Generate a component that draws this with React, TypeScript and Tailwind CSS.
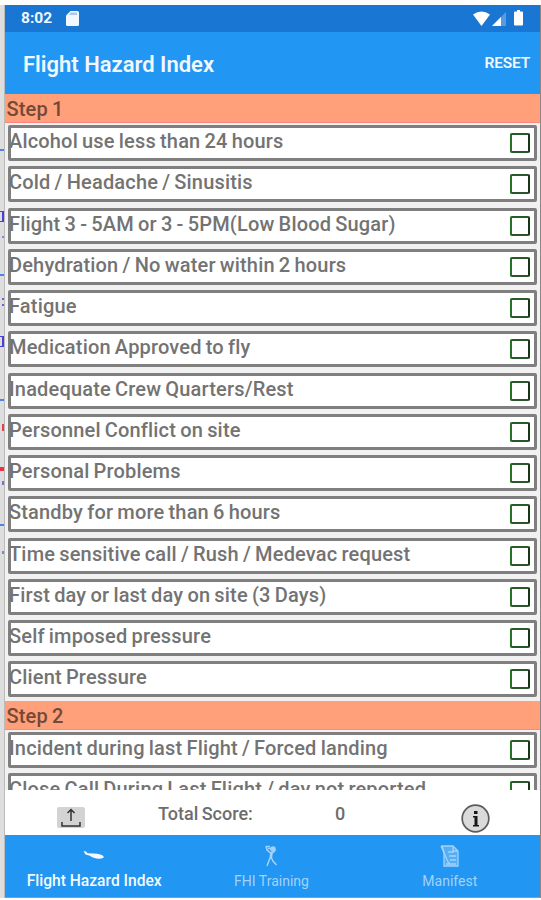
import React, { useState } from 'react';

const stepOne = [
  'Alcohol use less than 24 hours',
  'Cold / Headache / Sinusitis',
  'Flight 3 - 5AM or 3 - 5PM(Low Blood Sugar)',
  'Dehydration / No water within 2 hours',
  'Fatigue',
  'Medication Approved to fly',
  'Inadequate Crew Quarters/Rest',
  'Personnel Conflict on site',
  'Personal Problems',
  'Standby for more than 6 hours',
  'Time sensitive call / Rush / Medevac request',
  'First day or last day on site (3 Days)',
  'Self imposed pressure',
  'Client Pressure',
];

const stepTwo = [
  'Incident during last Flight / Forced landing',
  'Close Call During Last Flight / day not reported',
];

// slivers of the drawing behind the phone window
const edgeMarks = [
  { top: 149, className: 'h-[2px] w-[4px] bg-[#4f7fe8]' },
  { top: 211, className: 'h-[11px] w-[4px] border-y border-r-2 border-[#4a3fd8]' },
  { top: 236, className: 'h-[2px] w-[2px] ml-[2px] bg-[#8a84d8]' },
  { top: 274, className: 'h-[2px] w-[4px] bg-[#4f7fe8]' },
  { top: 298, className: 'h-[2px] w-[2px] ml-[2px] bg-[#6a60d8]' },
  { top: 304, className: 'h-[2px] w-[2px] ml-[2px] bg-[#6a60d8]' },
  { top: 336, className: 'h-[11px] w-[4px] border-y border-r-2 border-[#4a3fd8]' },
  { top: 399, className: 'h-[2px] w-[4px] bg-[#4f7fe8]' },
  { top: 424, className: 'h-[7px] w-[2px] ml-[2px] bg-[#e04545]' },
  { top: 467, className: 'h-[4px] w-[4px] bg-[#f03040]' },
  { top: 481, className: 'h-[4px] w-[2px] ml-[2px] bg-[#7a70d0]' },
  { top: 524, className: 'h-[2px] w-[4px] bg-[#4f7fe8]' },
  { top: 551, className: 'h-[3px] w-[2px] ml-[2px] bg-[#8580d0]' },
];

const StepHeader = ({ title }: { title: string }) => (
  <div className="h-[29px] shrink-0 border-b border-[#ff8585] bg-[#ffa07a] pl-[1.5px]">
    <h2 className="text-[20px] leading-[31px] font-medium tracking-[0.17px] [word-spacing:-1px] text-[#744938]">{title}</h2>
  </div>
);

interface HazardRowProps {
  label: string;
  checked: boolean;
  onToggle: () => void;
}

const HazardRow: React.FC<HazardRowProps> = ({ label, checked, onToggle }) => (
  <div className="h-[41.25px] shrink-0 pt-[2px] pr-[3px] pl-[3px]">
    <button
      onClick={onToggle}
      className="flex h-[36px] w-full items-start justify-between rounded-[2px] border-[3px] border-[#7f7f7f] bg-white pr-[4px] text-left"
    >
      <span className="-ml-[2px] text-[20px] leading-[26px] font-medium tracking-[0.17px] [word-spacing:-1px] whitespace-nowrap text-[#737373]">
        {label}
      </span>
      <span
        className={`mt-[5px] h-[20px] w-[20px] shrink-0 rounded-[2px] border-2 border-t-[#2b592b] border-r-[#173817] border-b-[#2b552b] border-l-[#267326] ${checked ? 'bg-[#267326]' : 'bg-white'}`}
      />
    </button>
  </div>
);

export default function App() {
  const [checked, setChecked] = useState<string[]>([]);

  const toggle = (label: string) => {
    setChecked(prev => (prev.includes(label) ? prev.filter(l => l !== label) : [...prev, label]));
  };

  const renderRow = (label: string) => (
    <HazardRow key={label} label={label} checked={checked.includes(label)} onToggle={() => toggle(label)} />
  );

  return (
    <div className="relative h-[900px] w-[541px] overflow-hidden bg-white pt-[5px] font-['Roboto',sans-serif]">
      <div className="flex h-[893px]">
        <div className="w-[5px] shrink-0 border-r border-[#bbb] bg-[#dedede]" />

        <div className="flex min-w-0 flex-1 flex-col">
          {/* Status bar */}
          <div className="flex h-[27px] shrink-0 items-center bg-[#1976d2] pl-[16px] text-[#f1f8ff]">
            <span className="text-[15.5px] leading-[27px] font-bold">8:02</span>
            <svg className="ml-[14px]" width="13" height="15" viewBox="0 0 13 15">
              <path d="M4.5 0h7Q13 0 13 1.5v12q0 1.5-1.5 1.5h-10Q0 15 0 13.500V4.500z" fill="#f2f8ff" />
              <path d="M4.500 1.500h6.500v2.500h-8z" fill="#a9caec" />
            </svg>
            <svg className="mr-[16px] ml-auto" width="51" height="17" viewBox="0 0 51 17">
              <path d="M0 4.500Q8.500-1.500 17 4.500L8.500 16z" fill="#fff" />
              <path d="M33 2v14H19z" fill="#5a9ade" />
              <path d="M28 7v9h-9z" fill="#fff" />
              <path d="M44 0h3v1.500h2q1 0 1 1v12q0 1-1 1h-7q-1 0-1-1v-12q0-1 1-1h2z" fill="#fff" />
            </svg>
          </div>

          {/* App bar */}
          <header className="flex h-[62px] shrink-0 items-center justify-between bg-[#2196f3] pr-[10px] pl-[18px] text-[#f1f8ff]">
            <h1 className="pt-[2px] text-[22px] font-semibold whitespace-nowrap">Flight Hazard Index</h1>
            <button className="pt-[2px] text-[15.5px] font-semibold tracking-[-0.2px]">RESET</button>
          </header>

          <main className="flex h-[696px] shrink-0 flex-col overflow-hidden bg-[#f1f1f1]">
            <StepHeader title="Step 1" />
            {stepOne.map(renderRow)}
            <StepHeader title="Step 2" />
            {stepTwo.map(renderRow)}
          </main>

          {/* Score */}
          <div className="flex h-[45px] shrink-0 items-start bg-white text-[18px] font-medium text-[#6d6d6d]">
            <button className="mt-[17px] ml-[52px]">
              <svg width="28" height="21" viewBox="0 0 28 21" fill="none" stroke="#333" strokeWidth="1.500">
                <rect width="28" height="21" rx="2" fill="#d3d3d3" stroke="none" />
                <path d="M14 14V2.500M10.500 6L14 2.500 17.500 6" />
                <path d="M5 15v4h18v-4" />
              </svg>
            </button>
            <span className="mt-[10px] ml-[73px] w-[177px] leading-[27px] [word-spacing:-1px]">Total Score:</span>
            <span className="mt-[10px] leading-[27px]">0</span>
            <button className="mt-[14px] mr-[50px] ml-auto">
              <svg width="29" height="29" viewBox="0 0 29 29">
                <circle cx="14.500" cy="14.500" r="13.300" fill="#dadada" stroke="#5c5c5c" strokeWidth="1.700" />
                <path d="M13 7h3.500v3H13zM12 12h4.500v9H18v1.500h-6V21h1.500v-7.500H12z" fill="#171717" />
              </svg>
            </button>
          </div>

          {/* Tabs */}
          <nav className="grid h-[62px] shrink-0 grid-cols-3 bg-[#2196f3] text-[#a3d2fa]">
            <button className="flex flex-col items-center text-[#f4faff]">
              <svg className="mt-[9px]" width="24" height="24" viewBox="0 0 24 24" fill="currentColor">
                <path d="M1.500 7l2.500.5 1.500 1.800 6 .2Q20 9.500 22 13q-1 2-5 1.800-6-.3-9-3L3.500 10.500z" />
              </svg>
              <span className="pt-px text-[15.600px] leading-[24px] font-medium">Flight Hazard Index</span>
            </button>
            <button className="flex flex-col items-center pr-[2px]">
              <svg className="mt-[9px]" width="24" height="24" viewBox="0 0 24 24" fill="none" stroke="currentColor" strokeWidth="1.500">
                <circle cx="14" cy="5" r="2" fill="currentColor" />
                <path d="M7 2l1 4 3 2.500h3l2.500-2.500M7 2.500h4M9 4.500h3" />
                <path d="M11 8h3l-1 7h-2.500z" fill="currentColor" stroke="none" />
                <path d="M11 14l-3 8M12.500 14l1.500 3 3.500 4" />
              </svg>
              <span className="pt-px text-[14px] leading-[25px]">FHI Training</span>
            </button>
            <button className="flex flex-col items-center pr-[2px]">
              <svg className="mt-[9px]" width="24" height="24" viewBox="0 0 24 24" fill="none" stroke="currentColor" strokeWidth="1.300">
                <path d="M4 2h11l5 5v15H6V8z" fill="#56aef5" />
                <path d="M3 2l7 16 2 2M15 2v5h5M10 8h6M11 12h7M12 16h6M8 20h10" />
              </svg>
              <span className="pt-px text-[14px] leading-[25px]">Manifest</span>
            </button>
          </nav>
          <div className="h-px bg-[#999]" />
        </div>

        <div className="w-px shrink-0 bg-[#888]" />
      </div>

      {edgeMarks.map(mark => (
        <div key={mark.top} className={`absolute left-0 ${mark.className}`} style={{ top: mark.top }} />
      ))}
    </div>
  );
}
